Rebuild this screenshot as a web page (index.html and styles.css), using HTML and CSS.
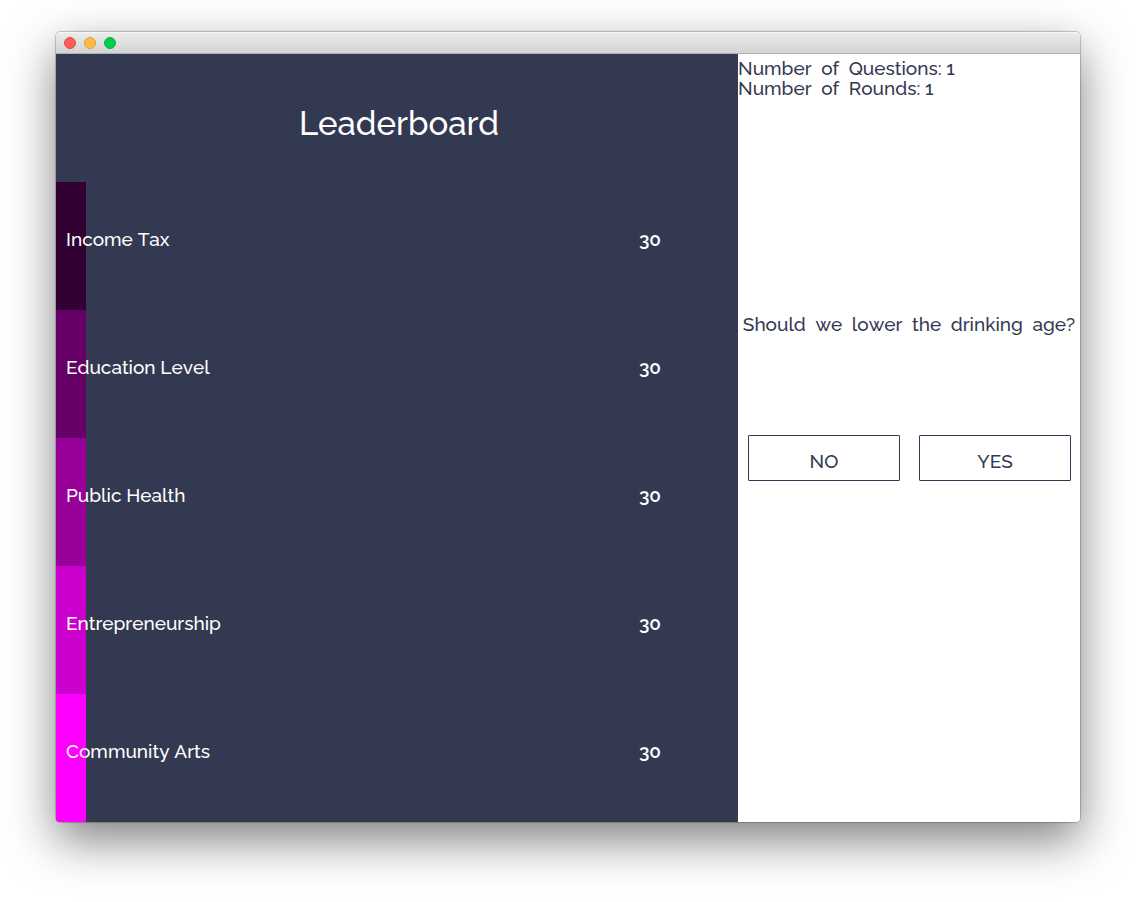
FILE: index.html
```html
<!DOCTYPE html>
<html lang="en">
<head>
<meta charset="utf-8">
<title>Leaderboard</title>
<link rel="stylesheet" href="styles.css">
</head>
<body>
<div class="window">
  <header class="titlebar">
    <button class="dot close" aria-label="Close"></button>
    <button class="dot minimize" aria-label="Minimize"></button>
    <button class="dot zoom" aria-label="Zoom"></button>
  </header>
  <main class="content">
    <section class="board">
      <h1 class="title">Leaderboard</h1>
      <div class="row tone-1"><span>Income Tax</span><span class="score">30</span></div>
      <div class="row tone-2"><span>Education Level</span><span class="score">30</span></div>
      <div class="row tone-3"><span>Public Health</span><span class="score">30</span></div>
      <div class="row tone-4"><span>Entrepreneurship</span><span class="score">30</span></div>
      <div class="row tone-5"><span>Community Arts</span><span class="score">30</span></div>
    </section>
    <section class="panel">
      <div class="stats">
        <div class="stat">Number  of  Questions: 1</div>
        <div class="stat">Number  of  Rounds: 1</div>
      </div>
      <div class="poll">
        <p class="question">Should  we  lower  the  drinking  age?</p>
        <div class="answers">
          <button class="answer">NO</button>
          <button class="answer">YES</button>
        </div>
      </div>
    </section>
  </main>
</div>
</body>
</html>
```

FILE: styles.css
```css
* { box-sizing: border-box; }

body {
  margin: 0;
  min-height: 100vh;
  padding: 32px 56px 80px;
  display: flex;
  background: #fff;
  color: #343952;
  font-family: Raleway, "Open Sans", sans-serif;
  font-size: 19px;
  font-weight: 500;
  line-height: 20px;
  font-kerning: none;
}

.window {
  flex: 1;
  display: flex;
  flex-direction: column;
  border-radius: 5px;
  box-shadow: 0 0 1px 1px rgba(0, 0, 0, 0.22), 0 18px 48px rgba(0, 0, 0, 0.5);
}

.titlebar {
  height: 22px;
  padding: 0 8px;
  display: flex;
  align-items: center;
  gap: 8px;
  border-radius: 5px 5px 0 0;
  border-top: 1px solid #f6f6f6;
  border-bottom: 1px solid #b1b1b1;
  background: linear-gradient(#ebebeb, #d3d3d3);
}

.dot {
  width: 12px;
  height: 12px;
  padding: 0;
  border: 1px solid;
  border-radius: 50%;
}
.close { background: #ff5b58; border-color: #e2504b; }
.minimize { background: #ffbb45; border-color: #dfa03d; }
.zoom { background: #00cd4e; border-color: #10b243; }

.content {
  flex: 1;
  display: grid;
  grid-template-columns: 682fr 342fr;
  border-radius: 0 0 4px 4px;
  overflow: hidden;
}

.board {
  display: grid;
  grid-template-rows: repeat(6, 1fr);
  background: #343952;
  color: #fff;
}

.title {
  margin: 0;
  padding: 12px 0 0 4px;
  align-self: center;
  text-align: center;
  font-size: 33px;
  line-height: 40px;
  font-weight: 500;
  font-kerning: normal;
}

.row {
  display: flex;
  align-items: center;
  justify-content: space-between;
  padding: 0 77px 14px 10px;
  background: linear-gradient(var(--tone), var(--tone)) left / 30px 100% no-repeat;
}
.tone-1 { --tone: #330033; }
.tone-2 { --tone: #660066; }
.tone-3 { --tone: #990099; }
.tone-4 { --tone: #cc00cc; }
.tone-5 { --tone: #ff00ff; }

.score { font-weight: 600; }

.panel {
  display: grid;
  grid-template-rows: 1fr 2fr;
  background: #fff;
}

.stats { padding-top: 4px; }

.poll { padding-top: 4px; }

.stat,
.question { white-space: pre-wrap; }

.question {
  margin: 0 0 101px;
  text-align: center;
}

.answers {
  display: grid;
  grid-template-columns: 1fr 1fr;
  gap: 19px;
  padding: 0 9px 0 10px;
}

.answer {
  height: 46px;
  padding: 6px 0 0;
  border: 1px solid #343952;
  border-radius: 1px;
  background: #fff;
  color: inherit;
  font: inherit;
  font-kerning: none;
}
```
